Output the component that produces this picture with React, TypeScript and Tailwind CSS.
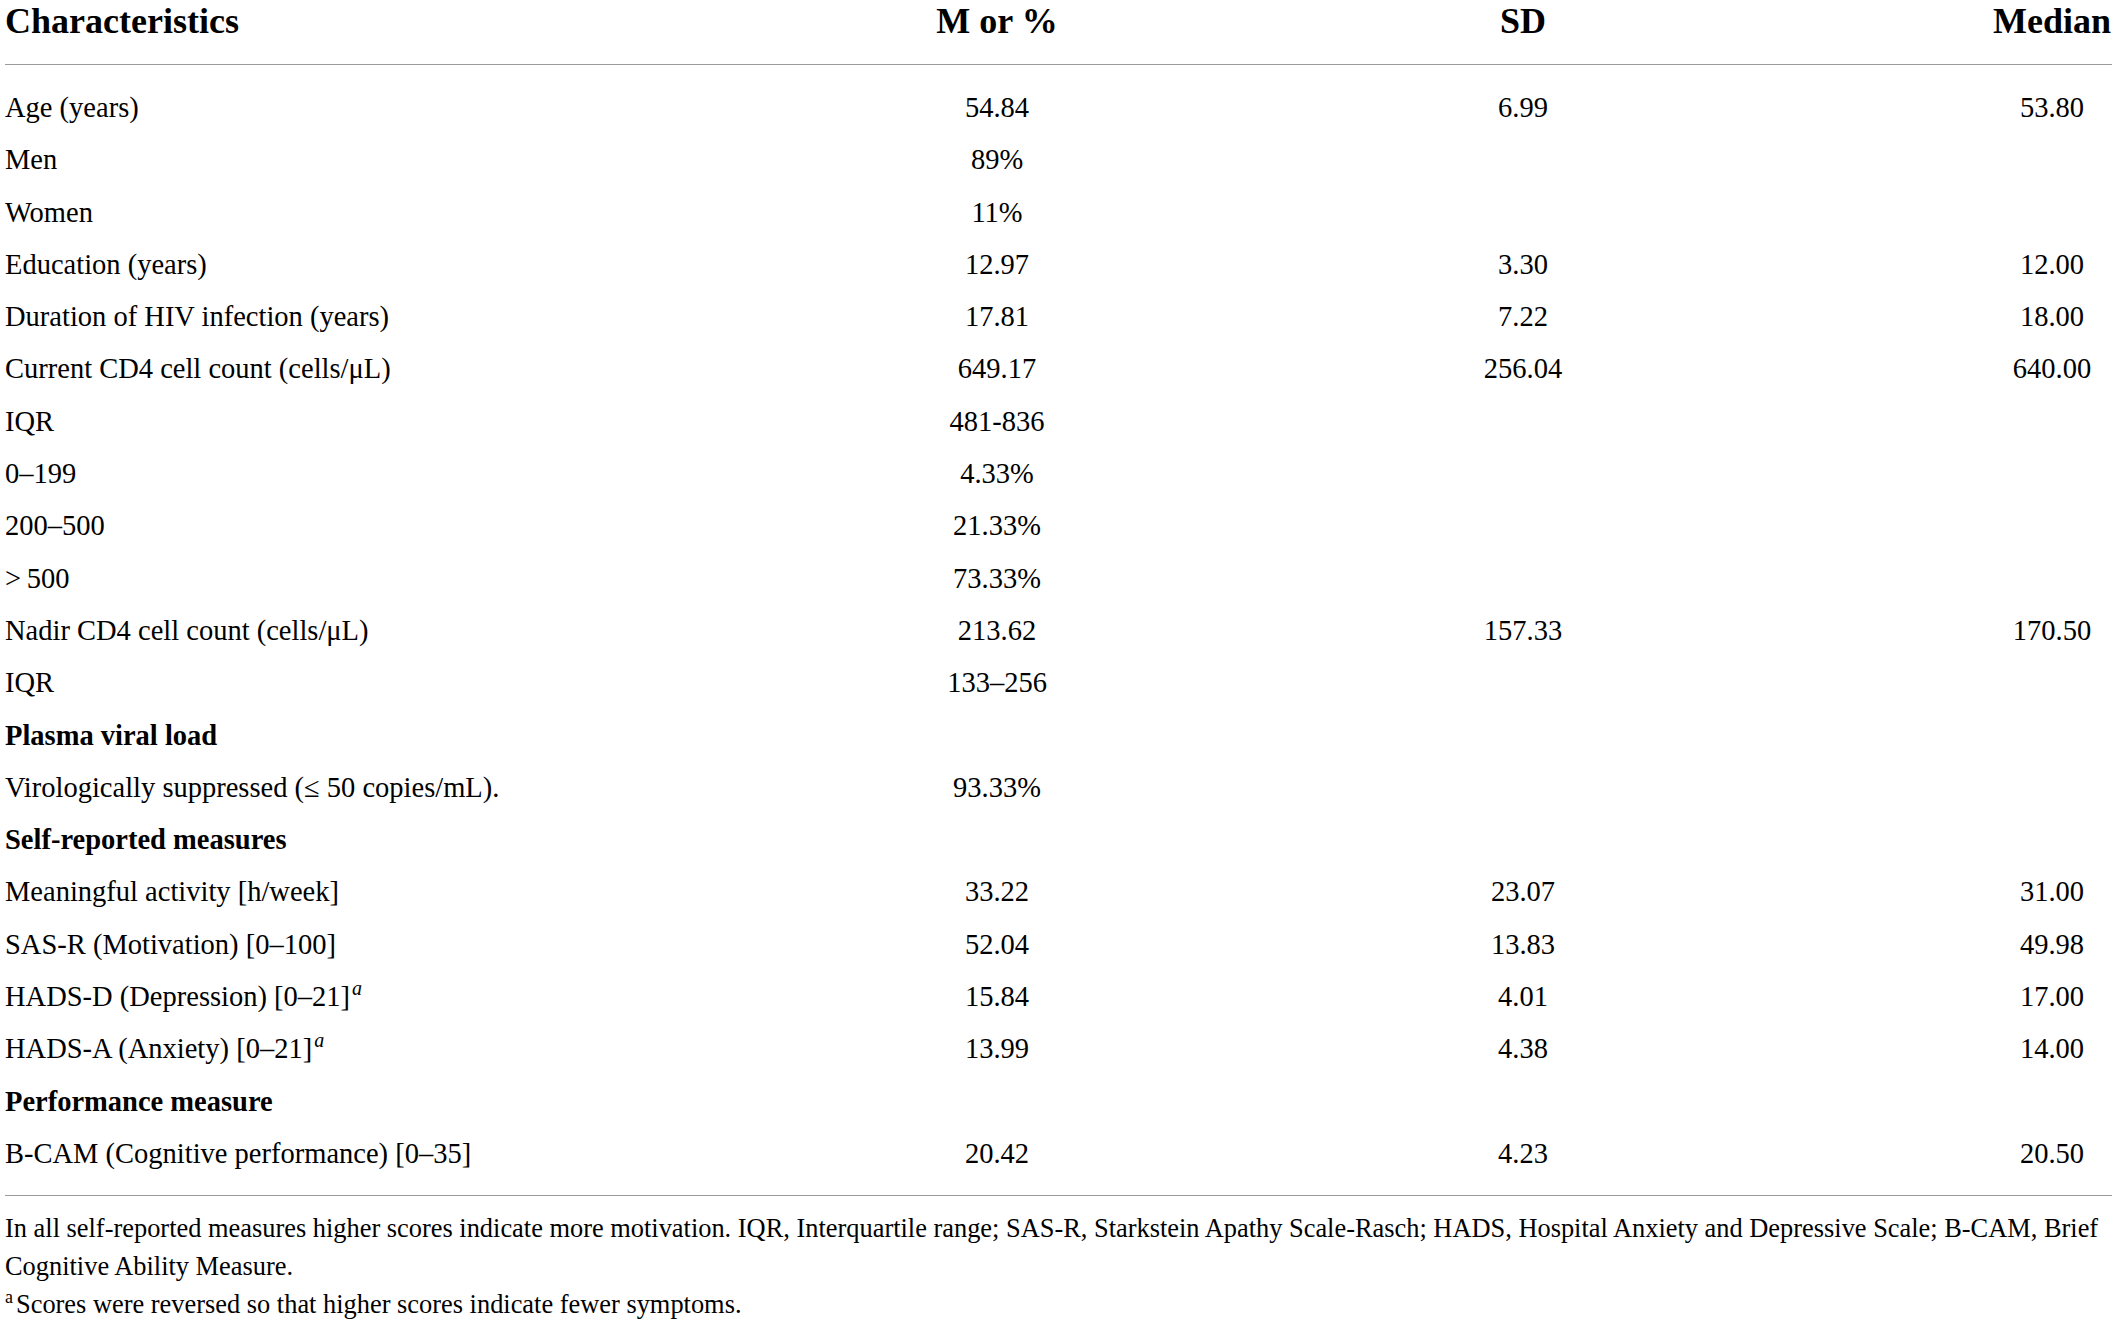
import React from "react";

type Row = {
  label: React.ReactNode;
  m?: string;
  sd?: string;
  median?: string;
  bold?: boolean;
};

const Sup = () => <sup className="italic text-[20px] ml-[2px] -top-[11px]">a</sup>;

const rows: Row[] = [
  { label: "Age (years)", m: "54.84", sd: "6.99", median: "53.80" },
  { label: "Men", m: "89%" },
  { label: "Women", m: "11%" },
  { label: "Education (years)", m: "12.97", sd: "3.30", median: "12.00" },
  { label: "Duration of HIV infection (years)", m: "17.81", sd: "7.22", median: "18.00" },
  { label: "Current CD4 cell count (cells/\u03bcL)", m: "649.17", sd: "256.04", median: "640.00" },
  { label: "IQR", m: "481-836" },
  { label: "0\u2013199", m: "4.33%" },
  { label: "200\u2013500", m: "21.33%" },
  { label: ">\u2009500", m: "73.33%" },
  { label: "Nadir CD4 cell count (cells/\u03bcL)", m: "213.62", sd: "157.33", median: "170.50" },
  { label: "IQR", m: "133\u2013256" },
  { label: "Plasma viral load", bold: true },
  { label: "Virologically suppressed (\u2264 50 copies/mL).", m: "93.33%" },
  { label: "Self-reported measures", bold: true },
  { label: "Meaningful activity [h/week]", m: "33.22", sd: "23.07", median: "31.00" },
  { label: "SAS-R (Motivation) [0\u2013100]", m: "52.04", sd: "13.83", median: "49.98" },
  {
    label: (
      <>
        HADS-D (Depression) [0&ndash;21]
        <Sup />
      </>
    ),
    m: "15.84",
    sd: "4.01",
    median: "17.00",
  },
  {
    label: (
      <>
        HADS-A (Anxiety) [0&ndash;21]
        <Sup />
      </>
    ),
    m: "13.99",
    sd: "4.38",
    median: "14.00",
  },
  { label: "Performance measure", bold: true },
  { label: "B-CAM (Cognitive performance) [0\u201335]", m: "20.42", sd: "4.23", median: "20.50" },
];

const COLS = "grid grid-cols-[695px_594px_458px_1fr]";

export default function App() {
  return (
    <div className="min-h-screen bg-white text-black font-['Liberation_Serif',serif] pl-[5px] pr-[7px]">
      {/* header */}
      <div className={`${COLS} h-[65px] border-b border-[#9b9b9b] text-[36px] leading-[42px] font-bold`}>
        <div>Characteristics</div>
        <div className="text-center">M or %</div>
        <div className="text-center">SD</div>
        <div className="text-center pl-[240px]">Median</div>
      </div>

      {/* body */}
      <div className="pt-[17px] pb-[15px] border-b border-[#9b9b9b] text-[28.5px]">
        {rows.map((r, i) => (
          <div key={i} className={`${COLS} h-[52.3px] leading-[52.3px] whitespace-nowrap`}>
            <div className={r.bold ? "font-bold" : ""}>{r.label}</div>
            <div className="text-center">{r.m}</div>
            <div className="text-center">{r.sd}</div>
            <div className="text-center pl-[240px]">{r.median}</div>
          </div>
        ))}
      </div>

      {/* notes */}
      <div className="pt-[13px] text-[26.4px] leading-[38px]">
        <p>
          In all self-reported measures higher scores indicate more motivation. IQR, Interquartile range; SAS-R,
          Starkstein Apathy Scale-Rasch; HADS, Hospital Anxiety and Depressive Scale; B-CAM, Brief Cognitive Ability
          Measure.
        </p>
        <p>
          <sup className="text-[18px] -top-[10px] mr-[3px]">a</sup>
          Scores were reversed so that higher scores indicate fewer symptoms.
        </p>
      </div>
    </div>
  );
}
